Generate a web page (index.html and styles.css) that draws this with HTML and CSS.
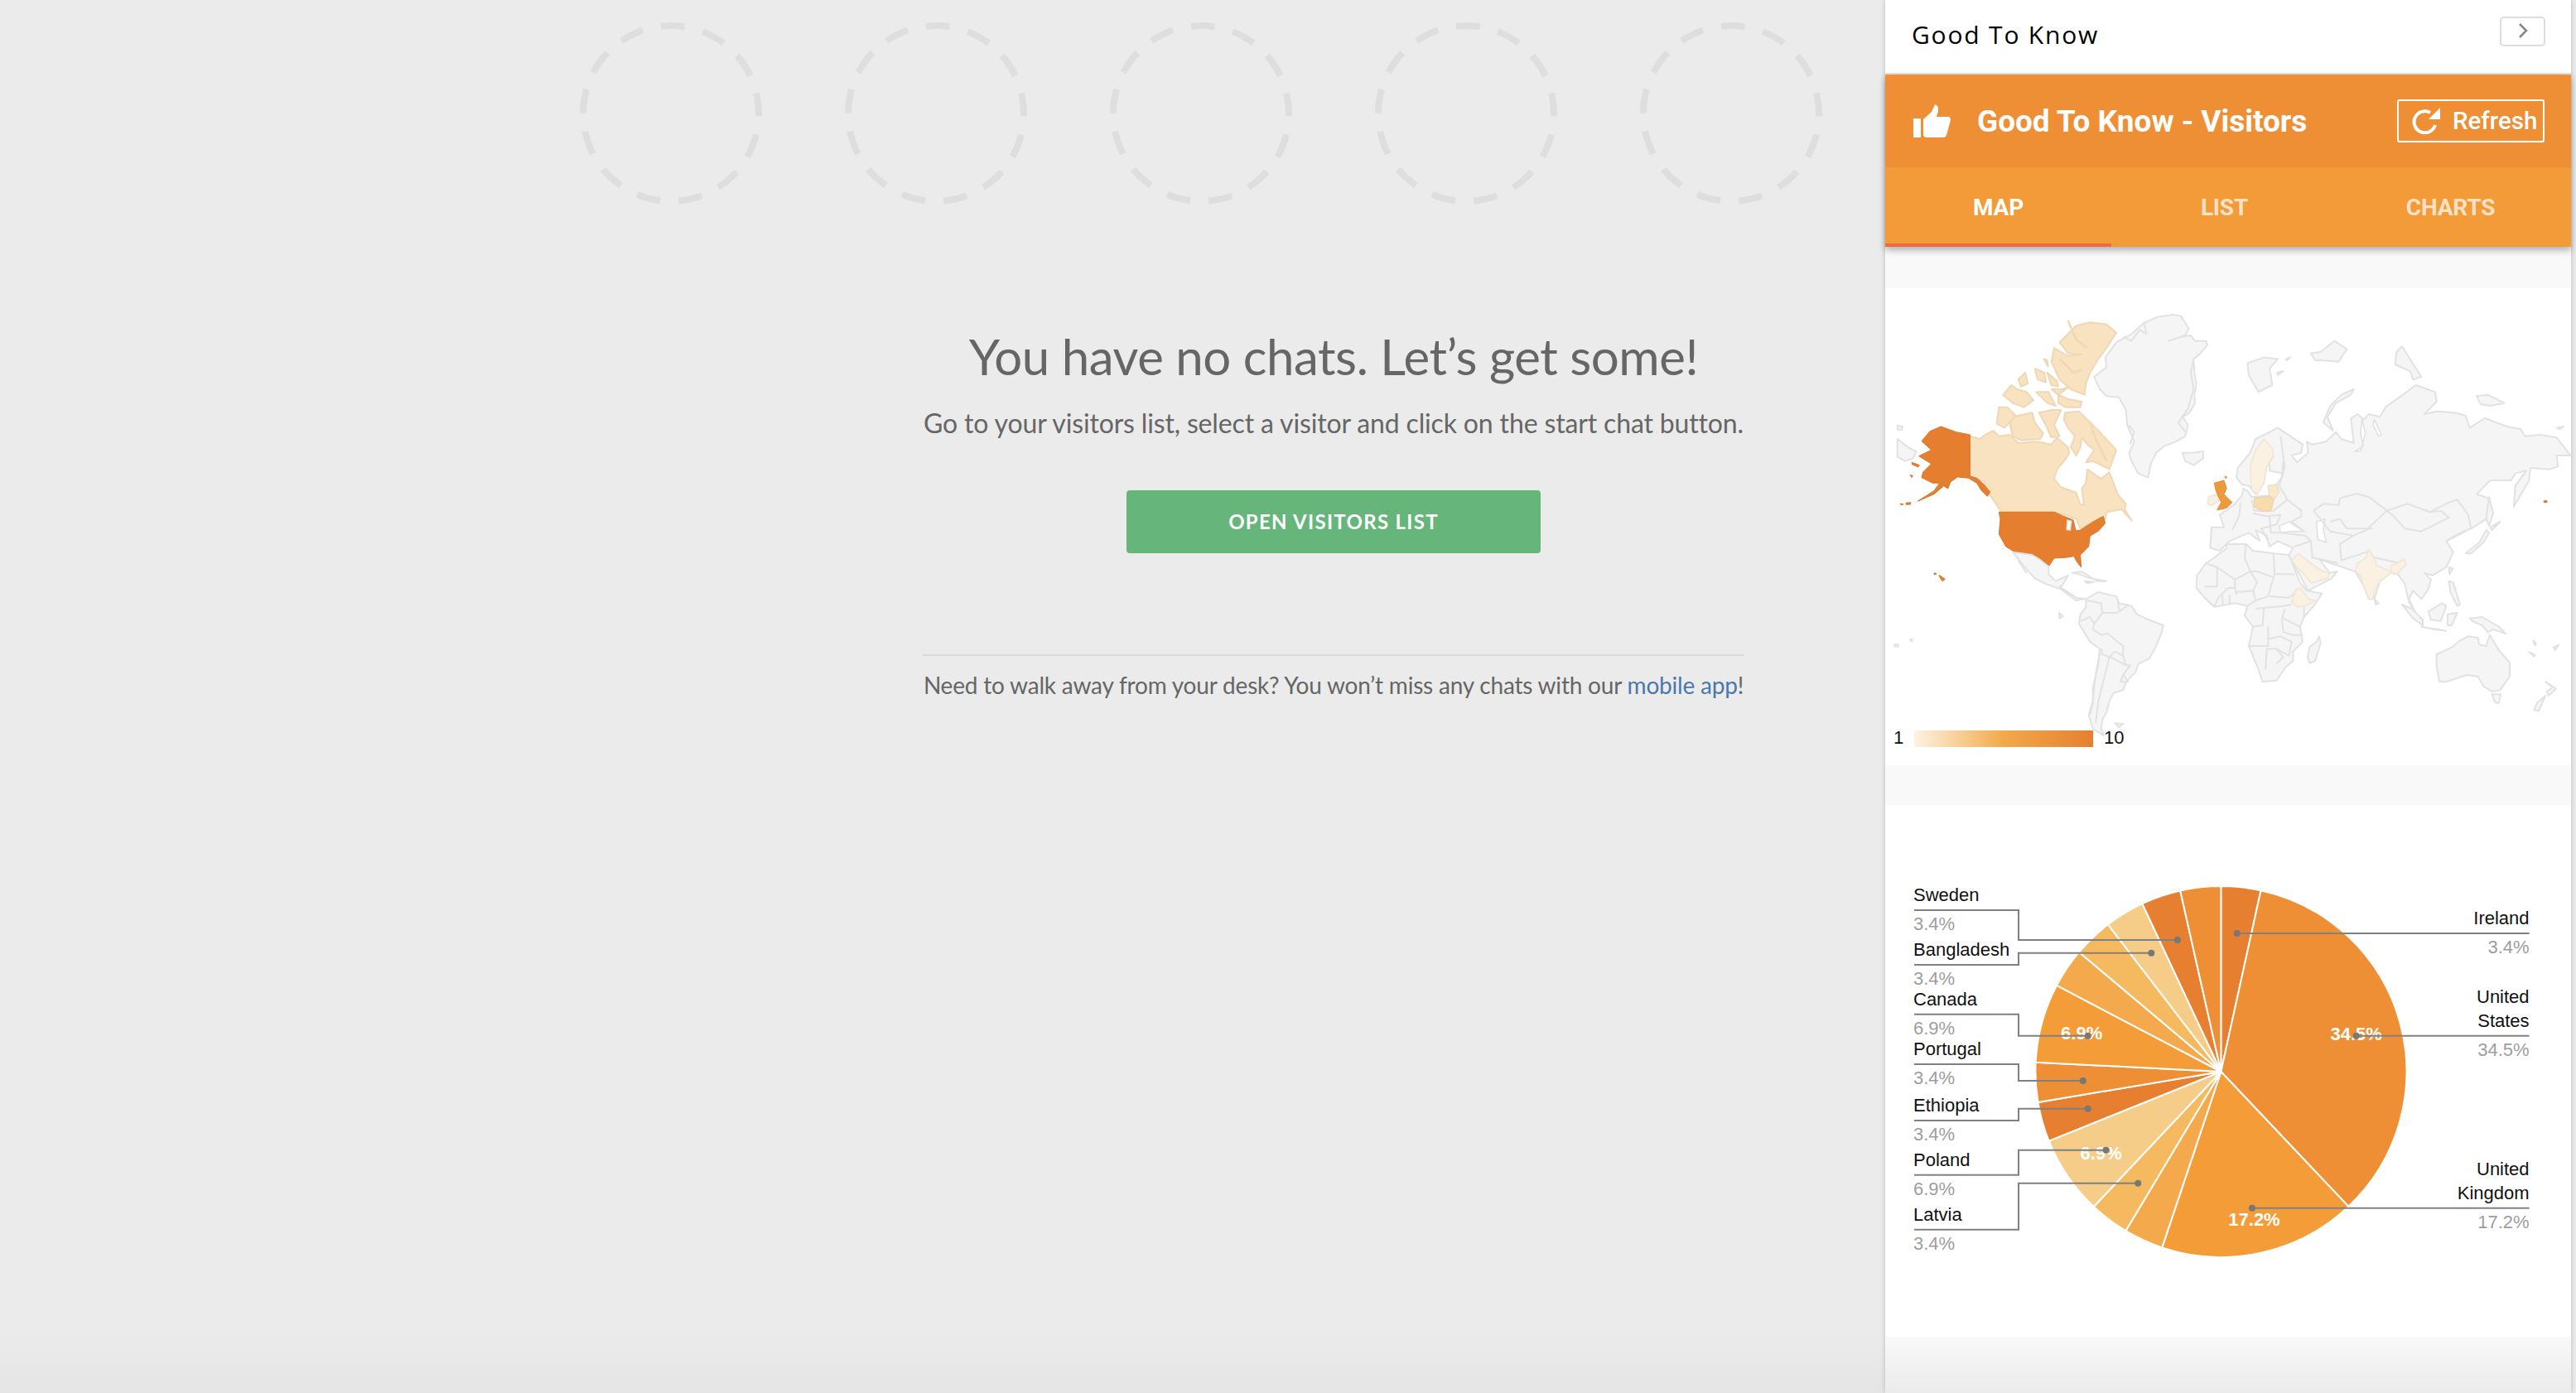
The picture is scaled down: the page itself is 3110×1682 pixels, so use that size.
FILE: index.html
```html
<!DOCTYPE html>
<html>
<head>
    <title>Chats</title>
<link rel="stylesheet" href="styles.css">
</head>
<body>
<div class="app">
    <div class="chats">
        <div class="circles">
            <svg class="ring" viewBox="0 0 220 220"><circle cx="110" cy="110" r="106"/></svg>
            <svg class="ring" viewBox="0 0 220 220"><circle cx="110" cy="110" r="106"/></svg>
            <svg class="ring" viewBox="0 0 220 220"><circle cx="110" cy="110" r="106"/></svg>
            <svg class="ring" viewBox="0 0 220 220"><circle cx="110" cy="110" r="106"/></svg>
            <svg class="ring" viewBox="0 0 220 220"><circle cx="110" cy="110" r="106"/></svg>
        </div>
        <div class="empty">
            <h1>You have no chats. Let’s get some!</h1>
            <p class="lead">Go to your visitors list, select a visitor and click on the start chat button.</p>
            <a class="open-btn" href="#">OPEN VISITORS LIST</a>
            <p class="foot">Need to walk away from your desk? You won’t miss any chats with our <a href="#">mobile app</a>!</p>
        </div>
    </div>

    <div class="panel">
        <div class="panel-top">
            <span class="panel-name">Good To Know</span>
            <button class="collapse">
                <svg width="12" height="18" viewBox="0 0 12 18"><polyline points="2,1 10,9 2,17"/></svg>
            </button>
        </div>
        <div class="head">
            <div class="bar">
                <svg class="thumb" width="45" height="40" viewBox="0 0 45 40">
                    <path d="M0 17h9v23H0z"/>
                    <path d="M12 18L22 9L26 0Q31 2 30 8L28 15H42Q45 15 45 19L40 37Q39 40 36 40H17Q12 40 12 36Z"/>
                </svg>
                <span class="bar-title">Good To Know - Visitors</span>
                <button class="refresh">
                    <svg width="34" height="32" viewBox="0 0 34 32">
                        <path class="refresh-arc" d="M28 21A13 13 0 1 1 22 6"/>
                        <polygon points="34,0 34,14 20,14"/>
                    </svg>
                    Refresh
                </button>
            </div>
            <div class="tabs">
                <a class="tab active">MAP</a>
                <a class="tab">LIST</a>
                <a class="tab">CHARTS</a>
            </div>
        </div>

        <div class="cards">
            <div class="card map-card">
                <svg width="828" height="576" viewBox="0 0 828 576">
                    <defs>
                        <linearGradient id="legendFill">
                            <stop offset="0" stop-color="#fdf3e3"/>
                            <stop offset="0.5" stop-color="#f3a94a"/>
                            <stop offset="1" stop-color="#e67f2f"/>
                        </linearGradient>
                    </defs>

                    <!-- north america + greenland -->
                    <g transform="translate(4,22) scale(.3333)">
                        <polygon class="land" points="1030,30 1060,35 1088,80 1075,105 1015,125 1060,110 1095,105 1110,125 1150,125 1155,140 1125,175 1105,190 1108,240 1115,280 1108,320 1110,350 1090,385 1065,400 1085,430 1075,470 1040,490 1000,505 970,530 950,570 940,620 905,605 880,560 872,530 890,490 865,430 860,375 835,330 790,325 765,300 745,255 790,220 785,185 825,130 880,100 925,60 975,38"/>
                        <polyline class="seam" points="925,60 935,100 910,85 880,125 850,110"/>
                        <polyline class="seam" points="1105,190 1095,240 1105,300 1085,370 1050,420 1075,455"/>
                        <polyline class="seam" points="870,430 890,455 875,500"/>
                        <polygon class="land" points="1065,530 1100,530 1140,525 1140,550 1105,575 1075,560"/>
                        <polygon class="land" points="32,432 50,435 48,447 34,447"/>
                        <polygon class="land" points="32,480 70,510 100,525 90,550 60,560 32,545"/>

                        <polygon class="can" points="295,470 330,480 350,465 380,450 400,470 440,465 470,495 540,490 590,500 610,475 650,510 655,530 640,555 610,590 600,625 625,655 680,675 695,718 708,718 700,660 715,640 720,590 770,625 800,600 830,680 860,715 855,735 880,775 845,735 790,745 785,770 745,775 695,805 680,770 640,755 600,745 410,745 365,680 345,635 320,625 295,615"/>
                        <polygon class="can" points="640,385 690,380 730,420 770,460 825,520 800,590 770,575 740,560 715,565 745,520 725,505 700,475 695,510 680,540 660,510 675,470 650,440 635,410"/>
                        <polygon class="can" points="440,400 470,395 520,385 530,420 560,460 550,480 480,485 450,470 440,430"/>
                        <polygon class="can" points="400,365 430,365 460,395 420,440 392,425"/>
                        <polygon class="can" points="545,385 590,375 625,375 600,430 620,470 590,475 570,430"/>
                        <polygon class="can" points="680,70 730,58 790,65 825,95 790,150 760,190 730,240 715,280 710,320 660,300 620,265 590,200 600,150 650,180 700,175 650,170 620,130 650,100"/>
                        <polygon class="can" points="615,320 650,335 700,345 695,365 640,365 615,350"/>
                        <polygon class="can" points="415,320 445,285 465,300 500,310 525,340 490,365 450,350"/>
                        <polygon class="can" points="470,265 495,240 505,280 480,290"/>
                        <polygon class="can" points="530,225 565,240 570,275 540,265"/>
                        <polygon class="can" points="575,240 610,270 615,290 590,285"/>
                        <polygon class="can" points="535,310 580,310 605,360 575,350"/>
                        <polygon class="can" points="590,300 630,300 655,290 615,320"/>
                        <polygon class="can" points="562,190 575,195 578,218"/>
                        <polyline class="can-seam" points="650,50 680,120 720,150"/>
                        <polyline class="can-seam" points="620,190 670,240 700,230"/>
                        <polyline class="can-seam" points="730,420 750,480 790,560"/>
                        <polygon class="sea" points="650,780 665,785 660,812 648,808"/>

                        <polygon class="usa" points="295,465 295,615 320,622 345,645 368,672 358,688 335,665 320,640 290,622 250,618 225,635 215,660 200,650 165,680 105,706 165,668 185,640 160,640 120,620 125,600 155,570 110,542 155,520 120,488 150,452 190,435 245,455"/>
                        <polygon class="usa" points="85,565 112,575 108,582 85,572"/>
                        <polygon class="usa" points="78,610 88,614 84,620"/>
                        <polygon class="usa" points="42,714 54,716 46,720"/>
                        <polygon class="usa" points="63,712 80,710 80,717 64,718"/>
                        <polygon class="usa" points="400,745 600,745 630,758 648,765 670,775 678,812 695,810 745,778 778,760 785,785 762,812 730,832 725,870 695,900 698,945 682,925 672,905 640,910 600,912 580,942 545,915 520,900 470,898 425,870 400,825 405,770"/>
                        <polygon class="sea" points="648,775 662,778 658,810 646,808"/>

                        <polygon class="ireland" points="1160,690 1190,680 1195,705 1170,722 1155,715"/>
                        <polygon class="uk" points="1180,640 1215,630 1225,660 1215,680 1245,710 1225,730 1190,738 1205,710 1195,690 1185,665"/>
                        <polygon class="uk" points="1218,615 1226,618 1222,624"/>
                        <polygon class="pale" points="1172,815 1190,812 1188,852 1172,856"/>
                    </g>

                    <!-- central + south america -->
                    <g transform="translate(4,312) scale(.3333)">
                        <polygon class="land" points="450,20 520,30 545,45 580,72 580,100 605,125 650,105 630,140 620,145 680,185 710,190 680,195 625,155 570,135 530,115 490,70"/>
                        <polyline class="thin" points="470,50 500,95"/>
                        <polygon class="land" points="665,95 700,90 755,125 790,125 730,115 690,100"/>
                        <polygon class="land" points="710,125 745,128 720,132"/>
                        <polygon class="land" points="618,240 632,252 620,260"/>
                        <polygon class="land" points="820,640 850,642 835,655"/>
                        <polygon class="land" points="22,355 35,355 35,362 22,362"/>
                        <polygon class="land" points="80,336 86,336 86,342 80,342"/>
                        <polygon class="land" points="715,190 760,165 825,180 835,205 880,215 900,245 935,262 995,285 990,310 965,370 945,405 905,425 895,455 860,490 850,520 815,530 800,560 790,600 775,625 770,660 780,685 740,660 725,610 740,560 740,510 760,430 765,370 730,345 690,280 695,245 715,220"/>
                        <polyline class="seam" points="720,195 770,205 775,240 745,280 740,300 770,320"/>
                        <polyline class="seam" points="770,320 795,315 830,345 850,360 850,395 860,430 875,430 850,465 870,490"/>
                        <polyline class="seam" points="770,370 775,390 800,400 820,380 850,395"/>
                        <polyline class="seam" points="765,380 745,500 740,570 730,610"/>
                        <polyline class="seam" points="695,270 730,255 745,280"/>
                        <polyline class="seam" points="830,190 835,235 870,210"/>
                        <polyline class="seam" points="775,240 830,240"/>
                        <polyline class="seam" points="850,465 840,490 870,490"/>
                        <polyline class="seam" points="805,400 860,430"/>
                        <polyline class="seam" points="800,400 780,480 760,560 750,640"/>
                        <polygon class="usa" points="183,103 205,118 195,125 185,110"/>
                        <rect class="usa" x="165" y="96" width="7" height="5"/>
                    </g>

                    <!-- eurasia -->
                    <g transform="translate(414,42) scale(.3333)">
                        <polygon class="land" points="-60,740 -15,740 -30,695 20,660 50,625 55,600 72,610 85,630 150,625 165,600 190,565 200,545 150,535 150,480 165,480 140,520 125,580 100,620 75,590 50,585 30,560 35,525 80,470 100,420 180,380 270,440 265,470 230,480 250,505 290,470 285,430 305,440 355,430 390,395 410,420 455,435 445,345 470,330 490,350 510,330 550,340 570,305 630,262 680,225 750,250 755,285 710,330 755,320 820,325 860,335 875,380 930,345 1010,375 1060,385 1075,410 1130,405 1190,415 1240,480 1190,480 1195,520 1165,530 1095,525 1090,570 1035,665 1040,590 1080,535 1040,545 1025,570 950,570 900,620 945,635 935,710 880,745 840,760 790,790 815,830 790,885 740,915 710,905 735,930 725,965 700,1000 670,970 655,1000 690,1075 700,1085 655,1010 640,945 615,910 590,905 550,935 530,1000 510,1000 490,950 460,900 400,880 370,870 330,855 368,905 395,900 375,925 290,970 220,840 235,815 180,790 150,810 140,770 100,750 115,790 75,760 40,775 5,790 -30,825 -65,815"/>
                        <polygon class="sea" points="185,735 220,720 275,755 225,755 190,760"/>
                        <polygon class="sea" points="320,720 350,710 345,750 355,795 325,785"/>
                        <polygon class="sea" points="485,345 497,400 480,465 460,465 490,445 480,400"/>
                        <polygon class="sea" points="530,350 555,405 545,410 525,370"/>
                        <polyline class="seam" points="310,680 345,655 400,660 405,635 465,618 510,630 575,680 600,700 640,745 700,755 800,705 770,680 730,685 650,655 575,680"/>
                        <polyline class="seam" points="730,685 800,650 830,640 870,695 880,745"/>
                        <polyline class="seam" points="575,680 500,750 455,770 370,755 310,680"/>
                        <polyline class="seam" points="370,720 405,710 430,745 525,745"/>
                        <polyline class="seam" points="455,770 405,800 410,860"/>
                        <polyline class="seam" points="300,790 305,850 400,870"/>
                        <polyline class="seam" points="200,500 195,560 185,590 215,640 265,680 265,700 230,720 275,755"/>
                        <polyline class="seam" points="190,410 205,520 195,560"/>
                        <polyline class="seam" points="45,650 40,700 15,750"/>
                        <polyline class="seam" points="85,640 95,680 165,680 215,640"/>
                        <polyline class="seam" points="90,690 140,700 190,695 175,730 120,745 145,790"/>
                        <polyline class="seam" points="150,700 155,760 190,760"/>
                        <polyline class="seam" points="190,760 280,770 300,790 240,810"/>
                        <polyline class="seam" points="410,860 500,830 530,850 620,870"/>
                        <polyline class="seam" points="790,790 860,755"/>
                        <polygon class="land" points="70,145 130,125 180,130 150,165 160,225 110,250 75,190"/>
                        <polygon class="land" points="300,110 335,105 385,65 430,95 400,140 340,135 315,135"/>
                        <polygon class="land" points="455,240 410,260 370,300 345,360 380,390 360,340 390,290 445,260"/>
                        <polygon class="land" points="630,85 665,140 700,195 670,205 660,175 605,150 610,105"/>
                        <polygon class="land" points="900,265 940,260 1000,290 950,300 915,295"/>
                        <polygon class="land" points="1190,380 1215,375 1200,385"/>
                        <polygon class="land" points="945,630 960,690 945,735 935,710"/>
                        <polygon class="land" points="860,835 910,795 935,750 945,760 925,795 880,835"/>
                        <polygon class="land" points="950,740 985,720 955,750"/>
                        <polygon class="land" points="176,180 200,175 180,188"/>
                        <polygon class="land" points="210,130 225,125 212,136"/>
                        <polygon class="pale" points="130,420 160,455 165,480 140,520 130,580 105,620 85,605 80,520 100,460"/>
                        <polygon class="latvia" points="145,590 175,585 185,610 170,635 150,625"/>
                        <polygon class="poland" points="95,635 150,628 165,640 155,680 125,682 95,665"/>
                        <rect class="usa" x="1144" y="644" width="11" height="6"/>
                    </g>

                    <!-- africa, south asia, oceania -->
                    <g transform="translate(344,312) scale(.3333)">
                        <polygon class="land" points="97,105 130,60 160,40 205,5 205,-8 275,-10 300,15 375,25 430,30 470,130 495,160 550,170 520,215 485,255 470,290 480,345 445,380 445,415 420,435 385,485 335,490 320,445 285,360 300,290 270,250 280,215 235,205 160,218 125,185 95,150"/>
                        <polyline class="seam" points="130,60 170,75 235,120 235,150 240,175"/>
                        <polyline class="seam" points="170,75 170,145 125,145"/>
                        <polyline class="seam" points="235,120 290,90 315,90 370,110"/>
                        <polyline class="seam" points="275,-10 270,40 290,90"/>
                        <polyline class="seam" points="375,25 378,100 450,100"/>
                        <polyline class="seam" points="378,100 355,180 310,195"/>
                        <polyline class="seam" points="290,90 315,130 300,160 310,195 280,215"/>
                        <polyline class="seam" points="235,150 210,150 175,185 160,218"/>
                        <polyline class="seam" points="235,165 305,160"/>
                        <polyline class="seam" points="190,175 190,210"/>
                        <polyline class="seam" points="215,175 215,210"/>
                        <polyline class="seam" points="310,225 410,215 440,210"/>
                        <polyline class="seam" points="360,180 430,185 450,170"/>
                        <polyline class="seam" points="340,220 335,285 300,290"/>
                        <polyline class="seam" points="415,225 405,265 410,310 440,320"/>
                        <polyline class="seam" points="410,260 470,290"/>
                        <polyline class="seam" points="485,255 485,215"/>
                        <polyline class="seam" points="355,290 355,360 285,360"/>
                        <polyline class="seam" points="355,335 400,325 440,345 430,395 385,370 350,370 345,445"/>
                        <polyline class="seam" points="440,320 480,320"/>
                        <polyline class="seam" points="385,370 410,400 385,425"/>
                        <polygon class="land" points="540,325 545,350 525,415 505,422 498,400 505,365 530,345"/>
                        <polygon class="pale" points="440,50 465,25 490,45 530,75 550,90 578,95 570,115 510,132 490,105 465,80"/>
                        <polygon class="pale" points="440,200 455,155 470,150 490,175 500,190 525,195 490,215 460,218"/>
                        <polygon class="pale" points="718,10 738,40 750,70 790,85 800,95 760,125 740,160 735,190 720,190 700,140 690,105 670,90 680,60 710,40"/>
                        <polygon class="pale" points="800,70 850,45 855,65 820,100 800,95"/>
                        <polygon class="land" points="740,190 755,205 745,210"/>
                        <polygon class="land" points="840,210 875,225 915,265 915,285 880,260"/>
                        <polygon class="land" points="910,290 1000,305 960,300"/>
                        <polygon class="land" points="935,235 985,205 1000,215 990,245 980,270 945,265"/>
                        <polygon class="land" points="1005,245 1040,240 1020,285 1005,285"/>
                        <polygon class="land" points="1085,260 1130,255 1190,290 1215,315 1170,300 1150,310 1130,285 1095,270"/>
                        <polygon class="land" points="1010,125 1025,130 1050,210 1040,215 1015,165"/>
                        <polygon class="land" points="1010,75 1025,80 1012,100"/>
                        <polygon class="land" points="965,390 1020,365 1050,340 1080,325 1115,330 1120,355 1145,360 1158,320 1190,375 1230,420 1230,470 1195,520 1165,525 1135,505 1115,470 1075,465 1000,490 975,490 965,430"/>
                        <polygon class="land" points="1165,535 1198,535 1190,568 1178,565"/>
                        <polygon class="land" points="1360,490 1398,515 1370,540 1365,525 1385,510"/>
                        <polygon class="land" points="1360,540 1335,595 1318,592 1330,565"/>
                        <polygon class="land" points="1315,340 1325,350 1322,358"/>
                        <polygon class="land" points="1300,382 1322,392 1318,398"/>
                        <polygon class="land" points="1388,365 1408,355 1395,375"/>
                    </g>

                    <rect x="35" y="534" width="216" height="20" fill="url(#legendFill)"/>
                    <text class="lbl" x="10" y="550">1</text>
                    <text class="lbl" x="264" y="550">10</text>
                </svg>
            </div>

            <div class="card pie-card">
                <svg width="828" height="642" viewBox="0 0 828 642">
                    <g class="pie" transform="translate(405.4,322)">
                        <path class="c1" d="M0 0L0 -224A224 224 0 0 1 48.1 -218.8Z"/>
                        <path class="c2" d="M0 0L48.1 -218.8A224 224 0 0 1 153.9 162.8Z"/>
                        <path class="c3" d="M0 0L153.9 162.8A224 224 0 0 1 -71.1 212.4Z"/>
                        <path class="c4" d="M0 0L-71.1 212.4A224 224 0 0 1 -115 192.2Z"/>
                        <path class="c5" d="M0 0L-115 192.2A224 224 0 0 1 -153.6 163Z"/>
                        <path class="c6" d="M0 0L-153.6 163A224 224 0 0 1 -207.8 83.6Z"/>
                        <path class="c1" d="M0 0L-207.8 83.6A224 224 0 0 1 -220.9 37Z"/>
                        <path class="c2" d="M0 0L-220.9 37A224 224 0 0 1 -223.7 -11.3Z"/>
                        <path class="c3" d="M0 0L-223.7 -11.3A224 224 0 0 1 -198.3 -104.1Z"/>
                        <path class="c4" d="M0 0L-198.3 -104.1A224 224 0 0 1 -171.3 -144.3Z"/>
                        <path class="c5" d="M0 0L-171.3 -144.3A224 224 0 0 1 -136.4 -177.7Z"/>
                        <path class="c6" d="M0 0L-136.4 -177.7A224 224 0 0 1 -95 -202.9Z"/>
                        <path class="c1" d="M0 0L-95 -202.9A224 224 0 0 1 -49.2 -218.5Z"/>
                        <path class="c2" d="M0 0L-49.2 -218.5A224 224 0 0 1 0 -224Z"/>
                    </g>

                    <text class="in" x="237.2" y="283">6.9%</text>
                    <text class="in" x="568.7" y="284">34.5%</text>
                    <text class="in" x="260.7" y="428">6.9%</text>
                    <text class="in" x="445.5" y="508">17.2%</text>

                    <polyline class="lead-line" points="35,127 161,127 161,163 352.9,163"/>
                    <polyline class="lead-line" points="35,193 161,193 161,178.7 321.3,178.7"/>
                    <polyline class="lead-line" points="35,252.7 161,252.7 161,278.7 244.7,278.7"/>
                    <polyline class="lead-line" points="35,313 161,313 161,333 238.8,333"/>
                    <polyline class="lead-line" points="35,381 161,381 161,366.7 244.7,366.7"/>
                    <polyline class="lead-line" points="35,446.7 161,446.7 161,416.7 266.6,416.7"/>
                    <polyline class="lead-line" points="35,512.7 161,512.7 161,456.7 305.2,456.7"/>
                    <polyline class="lead-line" points="777.6,155 424.6,155"/>
                    <polyline class="lead-line" points="777.6,278.7 568.7,278.7"/>
                    <polyline class="lead-line" points="777.6,486.7 442.9,486.7"/>
                    <circle class="dot" cx="352.9" cy="163" r="4"/>
                    <circle class="dot" cx="321.3" cy="178.7" r="4"/>
                    <circle class="dot" cx="244.7" cy="278.7" r="4"/>
                    <circle class="dot" cx="238.8" cy="333" r="4"/>
                    <circle class="dot" cx="244.7" cy="366.7" r="4"/>
                    <circle class="dot" cx="266.6" cy="416.7" r="4"/>
                    <circle class="dot" cx="305.2" cy="456.7" r="4"/>
                    <circle class="dot" cx="424.6" cy="155" r="4"/>
                    <circle class="dot" cx="568.7" cy="278.7" r="4"/>
                    <circle class="dot" cx="442.9" cy="486.7" r="4"/>

                    <text class="lbl" x="34" y="116">Sweden</text>
                    <text class="pct" x="34" y="151">3.4%</text>
                    <text class="lbl" x="34" y="182">Bangladesh</text>
                    <text class="pct" x="34" y="217">3.4%</text>
                    <text class="lbl" x="34" y="242">Canada</text>
                    <text class="pct" x="34" y="277">6.9%</text>
                    <text class="lbl" x="34" y="302">Portugal</text>
                    <text class="pct" x="34" y="337">3.4%</text>
                    <text class="lbl" x="34" y="370">Ethiopia</text>
                    <text class="pct" x="34" y="405">3.4%</text>
                    <text class="lbl" x="34" y="436">Poland</text>
                    <text class="pct" x="34" y="471">6.9%</text>
                    <text class="lbl" x="34" y="502">Latvia</text>
                    <text class="pct" x="34" y="537">3.4%</text>

                    <text class="lbl end" x="777.6" y="144">Ireland</text>
                    <text class="pct end" x="777.6" y="179">3.4%</text>
                    <text class="lbl end" x="777.6" y="239">United</text>
                    <text class="lbl end" x="777.6" y="268">States</text>
                    <text class="pct end" x="777.6" y="303">34.5%</text>
                    <text class="lbl end" x="777.6" y="447">United</text>
                    <text class="lbl end" x="777.6" y="476">Kingdom</text>
                    <text class="pct end" x="777.6" y="511">17.2%</text>
                </svg>
            </div>
        </div>
        <div class="panel-fade"></div>
    </div>
</div>
</body>
</html>
```

FILE: styles.css
```css
html, body {
    margin: 0;
    padding: 0;
    height: 100%;
}

body {
    background-color: #ebebeb;
    overflow: hidden;
}

.app {
    display: flex;
    height: 1682px;
}

/* left side */
.chats {
    width: 2276px;
    flex: none;
    background: linear-gradient(#ebebeb 1610px, #e5e5e5 1682px);
    font-family: Lato, sans-serif;
    color: #666;
}

.circles {
    display: flex;
    gap: 100px;
    padding: 27px 0 0 700px;
}

.ring {
    width: 220px;
    height: 220px;
}

.ring circle {
    fill: none;
    stroke: #dedede;
    stroke-width: 8;
    stroke-dasharray: 29 22.23;
    stroke-dashoffset: 25.5;
}

.empty {
    width: 992px;
    margin: 147px 0 0 1114px;
    text-align: center;
}

.empty h1 {
    margin: 0;
    font-size: 60px;
    font-weight: 400;
    letter-spacing: -0.45px;
    line-height: 72px;
}

.lead {
    margin: 25px 0 0;
    font-size: 32px;
    letter-spacing: -0.15px;
    line-height: 40px;
}

.open-btn {
    display: block;
    width: 500px;
    height: 76px;
    margin: 61px auto 0;
    background-color: #66b57b;
    border-radius: 4px;
    color: #fff;
    font-size: 24px;
    font-weight: 700;
    letter-spacing: 1.3px;
    line-height: 76px;
    text-decoration: none;
}

.foot {
    margin: 122px 0 0;
    padding-top: 16px;
    border-top: 2px solid #d9d9d9;
    font-size: 28px;
    letter-spacing: -0.2px;
    line-height: 38px;
    white-space: nowrap;
}

.foot a {
    color: #4a78ae;
    text-decoration: none;
}

/* right panel */
.panel {
    width: 828px;
    flex: none;
    display: flex;
    flex-direction: column;
    background-color: #f9f9f9;
    box-shadow: 0 0 6px rgba(0, 0, 0, 0.2);
    position: relative;
}

.panel-top {
    height: 88px;
    flex: none;
    display: flex;
    align-items: center;
    justify-content: space-between;
    padding: 0 31px 0 32px;
    background-color: #fff;
    border-bottom: 2px solid #e4e4e4;
}

.panel-name {
    font-family: "Open Sans", sans-serif;
    font-size: 30px;
    letter-spacing: 1.8px;
    color: #000;
    margin-top: -6px;
}

.collapse {
    width: 55px;
    height: 36px;
    margin-top: -12px;
    padding: 0;
    background-color: #fff;
    border: 2px solid #ddd;
    border-radius: 5px;
}

.collapse polyline {
    fill: none;
    stroke: #868686;
    stroke-width: 2.5;
}

.head {
    flex: none;
    box-shadow: 0 4px 8px rgba(0, 0, 0, 0.3);
    position: relative;
    font-family: Roboto, sans-serif;
    color: #fff;
}

.bar {
    height: 112px;
    display: flex;
    align-items: center;
    padding: 0 32px 0 34px;
    background-color: #ee8f35;
}

.thumb path {
    fill: #fff;
}

.bar-title {
    margin-left: 32px;
    font-size: 37px;
    font-weight: 700;
    letter-spacing: -0.05px;
    flex: 1;
}

.refresh {
    width: 178px;
    height: 52px;
    display: flex;
    align-items: center;
    gap: 15px;
    padding: 0 0 0 16px;
    background: none;
    border: 2px solid #fff;
    border-radius: 3px;
    color: #fff;
    font-family: Roboto, sans-serif;
    font-size: 29.5px;
    font-weight: 500;
}

.refresh polygon {
    fill: #fff;
}

.refresh-arc {
    fill: none;
    stroke: #fff;
    stroke-width: 4;
}

.tabs {
    height: 96px;
    display: grid;
    grid-template-columns: repeat(3, 273px);
    background-color: #f39b38;
}

.tab {
    box-sizing: border-box;
    height: 96px;
    padding-top: 2px;
    text-align: center;
    font-size: 28px;
    font-weight: 700;
    letter-spacing: -0.2px;
    line-height: 94px;
    color: rgba(255, 255, 255, 0.72);
}

.tab.active {
    color: #fff;
    border-bottom: 4px solid #ef6b3f;
}

.cards {
    flex: none;
    display: flex;
    flex-direction: column;
    gap: 48px;
    padding-top: 50px;
}

.card {
    background-color: #fff;
}

.card svg {
    display: block;
}

.map-card {
    height: 576px;
}

.pie-card {
    height: 642px;
}

.panel-fade {
    flex: 1;
    background: linear-gradient(#f9f9f9, #ebebeb);
}

/* map shapes */
.land {
    fill: #f5f5f5;
    stroke: #e2e2e2;
    stroke-width: 6;
    stroke-linejoin: round;
}

.seam, .thin {
    fill: none;
    stroke: #e2e2e2;
    stroke-width: 6;
    stroke-linejoin: round;
}

.sea {
    fill: #fff;
    stroke: #e2e2e2;
    stroke-width: 5;
}

.can {
    fill: #f9e2bf;
    stroke: #eed8b6;
    stroke-width: 6;
    stroke-linejoin: round;
}

.can-seam {
    fill: none;
    stroke: #eed8b6;
    stroke-width: 8;
}

.usa {
    fill: #e57f2f;
    stroke: #d9772c;
    stroke-width: 3;
    stroke-linejoin: round;
}

.uk {
    fill: #ec9a3c;
    stroke: #e0923a;
    stroke-width: 3;
}

.ireland, .pale {
    fill: #fbf1e2;
    stroke: #f0e6d6;
    stroke-width: 5;
    stroke-linejoin: round;
}

.latvia {
    fill: #fae8cd;
    stroke: #f0e0c8;
    stroke-width: 5;
}

.poland {
    fill: #f8dcb0;
    stroke: #efd5ac;
    stroke-width: 5;
}

/* pie */
.pie path {
    stroke: #fff;
    stroke-width: 2;
}

.c1 { fill: #e67f2f; }
.c2 { fill: #ee8f35; }
.c3 { fill: #f39c38; }
.c4 { fill: #f4aa4c; }
.c5 { fill: #f5ba60; }
.c6 { fill: #f6cd88; }

.lead-line {
    fill: none;
    stroke: #808080;
    stroke-width: 2;
}

.dot {
    fill: #777;
}

.lbl, .pct, .in {
    font-family: "Liberation Sans", Arial, sans-serif;
    font-size: 22px;
}

.lbl {
    fill: #111;
}

.pct {
    fill: #9e9e9e;
}

.in {
    fill: #fff;
    font-weight: 700;
    text-anchor: middle;
}

.end {
    text-anchor: end;
}
```
